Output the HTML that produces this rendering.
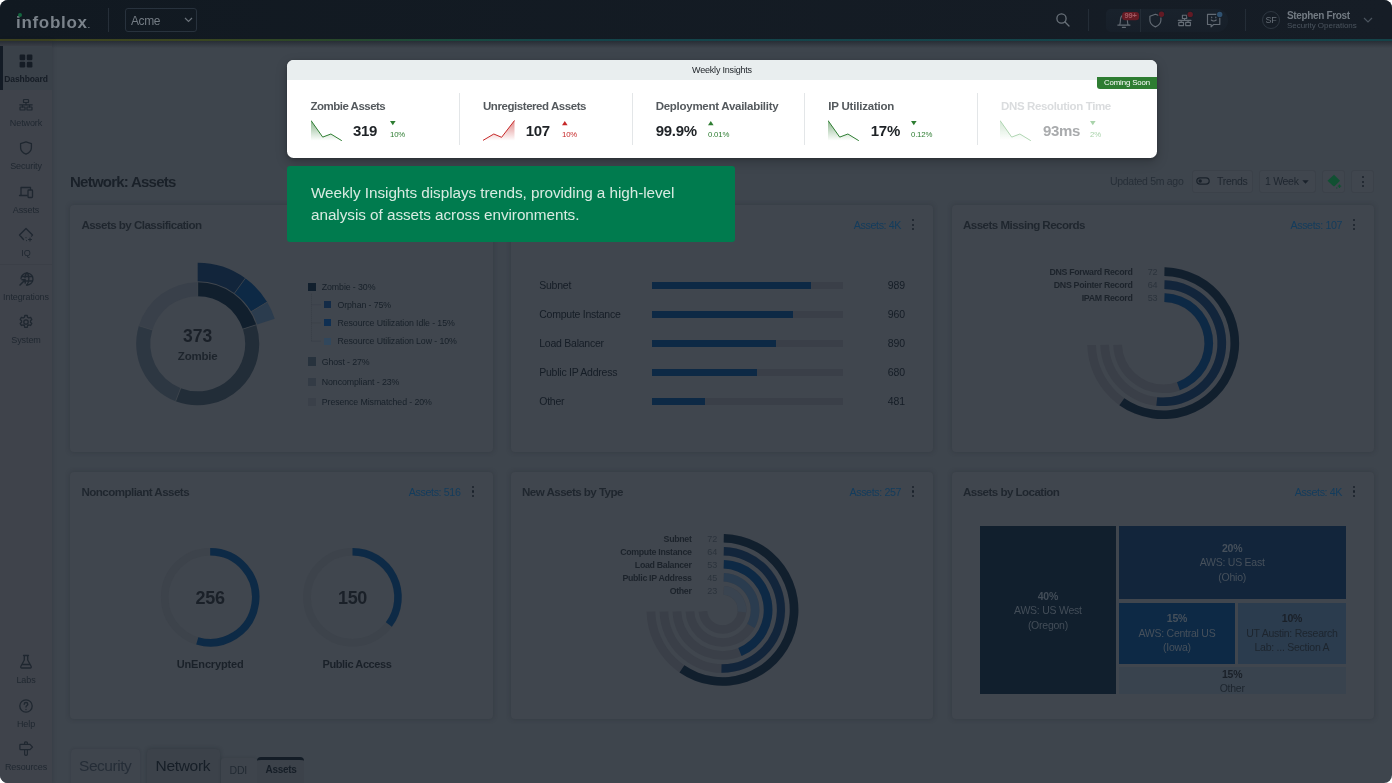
<!DOCTYPE html>
<html lang="en">
<head>
<meta charset="utf-8">
<title>Infoblox Portal - Network: Assets</title>
<style>
*{box-sizing:border-box;margin:0;padding:0}
html,body{width:1392px;height:783px;overflow:hidden;background:#fff}
body{font-family:"Liberation Sans",sans-serif;color:#1b222a;position:relative}
#app{will-change:transform;position:absolute;left:0;top:0;width:1392px;height:783px;background:#3e454d;border-radius:8px;overflow:hidden}
.abs{position:absolute}
/* header */
#hdr{position:absolute;left:0;top:0;width:1392px;height:40px;background:linear-gradient(90deg,#111921 0%,#161d26 100%)}
#hdrline{position:absolute;left:0;top:39px;width:1392px;height:2px;background:linear-gradient(90deg,#3f431f 0%,#3a4520 14%,#28472a 24%,#184a3c 32%,#14444a 40%,#154349 100%)}
#hdrshadow{position:absolute;left:0;top:41px;width:1392px;height:7px;background:linear-gradient(180deg,rgba(30,36,44,.7),rgba(30,36,44,0))}
/* sidebar */
#side{position:absolute;left:0;top:41px;width:52px;height:742px;background:#3f434b;box-shadow:0 0 4px rgba(28,33,40,.32)}
.nav{position:absolute;left:0;width:52px;height:44px;text-align:center;font-size:9px;color:#1f2730}
.nav span{position:absolute;left:-10px;width:72px;text-align:center;top:27.500px;line-height:11px;letter-spacing:-.1px}
.nav svg{position:absolute;left:17px;top:6px;width:18px;height:18px;fill:none;stroke:#1f2730;stroke-width:1.5;stroke-linecap:round;stroke-linejoin:round}
.nav.on{background:#3a4149;color:#151c25;font-weight:bold;font-size:8.5px;letter-spacing:-.35px}
.nav.on:before{content:"";position:absolute;left:0;top:0;width:3px;height:44px;background:#131b25}
/* cards */
.card{position:absolute;width:422.500px;height:247px;background:#40464e;border-radius:4px;box-shadow:0 0 5px rgba(30,35,42,.3)}
.card h3{position:absolute;left:11.400px;top:11.500px;font-size:11.600px;line-height:16px;font-weight:bold;color:#1f262e;letter-spacing:-.55px;white-space:nowrap}
.card .cnt{position:absolute;right:32px;top:12.500px;font-size:10.700px;line-height:14px;color:#123c5d;white-space:nowrap;letter-spacing:-.38px}
.kebab{position:absolute;width:3px;height:12px}
.kebab i{position:absolute;left:0;width:2.4px;height:2.4px;border-radius:50%;background:#1a222b}
.kebab i:nth-child(1){top:0}.kebab i:nth-child(2){top:4.5px}.kebab i:nth-child(3){top:9px}
.t{position:absolute;white-space:nowrap}
</style>
</head>
<body>
<div id="app">
<div id="hdr"></div>
<div id="hdrline"></div>
<div id="side"></div>
<div id="hdrshadow"></div>
<!--HEADER-->
<!-- header content -->
<div class="t" style="left:16px;top:11.500px;font-size:17px;line-height:22px;font-weight:bold;color:#7b838b;letter-spacing:.7px">infoblox<span style="font-size:8px;letter-spacing:0">.</span></div>
<div class="abs" style="left:18.200px;top:12.800px;width:3.800px;height:3.800px;border-radius:50%;background:#13663f"></div>
<div class="abs" style="left:108px;top:8px;width:1px;height:24px;background:#262f39"></div>
<div class="abs" style="left:125px;top:8px;width:72px;height:24px;border:1px solid #28323d;border-radius:3px"></div>
<div class="t" style="left:131px;top:13px;font-size:12px;line-height:16px;color:#747c84;letter-spacing:-.4px">Acme</div>
<svg class="abs" style="left:184px;top:17px" width="9" height="6" viewBox="0 0 9 6"><path d="M1 1l3.5 3.5L8 1" fill="none" stroke="#6a727a" stroke-width="1.2"/></svg>
<svg class="abs" style="left:1055px;top:12px" width="16" height="16" viewBox="0 0 16 16"><circle cx="6.5" cy="6.5" r="4.6" fill="none" stroke="#6a727a" stroke-width="1.3"/><path d="M10 10l4 4" stroke="#6a727a" stroke-width="1.3" stroke-linecap="round"/></svg>
<div class="abs" style="left:1088px;top:9px;width:1px;height:22px;background:#242d37"></div>
<div class="abs" style="left:1106px;top:8.500px;width:122px;height:23px;border-radius:5px 12px 12px 5px;background:linear-gradient(180deg,#19222c,#171f29)"></div>
<div class="abs" style="left:1140px;top:8.500px;width:1px;height:23px;background:#242d37"></div>
<svg class="abs" style="left:1100px;top:4px" width="140" height="32" viewBox="0 0 140 32" fill="none" stroke="#646c75" stroke-width="1.150" stroke-linecap="round" stroke-linejoin="round">
<path d="M17.800 21.100H30M19.700 21.100C20.400 19 20.300 17 20.500 15.300C20.800 12.600 22.300 11.400 23.900 11.400S27 12.600 27.300 15.300C27.500 17 27.400 19 28.100 21.100M22.400 23.400H25.400"/>
<path d="M55.400 10.300L60.900 12.200V16C60.900 19.500 58.500 21.700 55.400 22.900C52.300 21.700 49.900 19.500 49.900 16V12.200Z"/>
<path d="M82.400 11.200h4.300v3.300h-4.300zM78.800 18.400h4.700v3.200h-4.700zM85.700 18.400h4.700v3.200h-4.700zM84.550 14.500v1.900M78.300 16.400h12.700M81.150 16.400v2M88.050 16.400v2"/>
<path d="M107.500 10.300h12.300v10.200h-6.200l-2.500 2.300v-2.300h-3.600z"/>
<path d="M111.700 13v.7M115.800 13v.7M111.300 16c1.300 1.300 3.600 1.300 4.900 0"/>
<rect x="22.100" y="7.900" width="17" height="8.300" rx="3.300" fill="#651b24" stroke="none"/>
<circle cx="61.500" cy="10.200" r="3.400" fill="#171f29" stroke="none"/><circle cx="61.500" cy="10.200" r="2.700" fill="#621a24" stroke="none"/>
<circle cx="90.200" cy="10.400" r="3.400" fill="#171f29" stroke="none"/><circle cx="90.200" cy="10.400" r="2.700" fill="#621a24" stroke="none"/>
<circle cx="119.700" cy="10.400" r="3.400" fill="#171f29" stroke="none"/><circle cx="119.700" cy="10.400" r="2.700" fill="#2f5170" stroke="none"/>
</svg>
<div class="t" style="left:1122.100px;top:12px;width:17px;text-align:center;font-size:7.500px;line-height:8.300px;font-weight:bold;color:#a35b63;letter-spacing:-.2px">99+</div>
<div class="abs" style="left:1244.800px;top:9px;width:1px;height:22px;background:#242d37"></div>
<div class="abs" style="left:1262px;top:11px;width:18px;height:18px;border-radius:50%;border:1px solid #2e3741"></div>
<div class="t" style="left:1262px;top:14px;width:18px;text-align:center;font-size:9px;line-height:12px;color:#69717a;letter-spacing:-.2px">SF</div>
<div class="t" style="left:1287px;top:9px;font-size:10px;line-height:13px;font-weight:bold;color:#727a82;letter-spacing:-.35px">Stephen Frost</div>
<div class="t" style="left:1287px;top:21px;font-size:8px;line-height:10px;color:#4b545e;letter-spacing:-.03px">Security Operations</div>
<svg class="abs" style="left:1363px;top:17px" width="10" height="6" viewBox="0 0 10 6"><path d="M1 1l4 4 4-4" fill="none" stroke="#4a535d" stroke-width="1.200"/></svg>
<!--/HEADER-->
<!--SIDENAV-->
<!-- sidebar nav -->
<div class="nav on" style="top:46px"><svg viewBox="0 0 18 18" style="fill:#151c25;stroke:none"><rect x="2.600" y="2.600" width="5.600" height="5.600" rx="1.200"/><rect x="9.800" y="2.600" width="5.600" height="5.600" rx="1.200"/><rect x="2.600" y="9.800" width="5.600" height="5.600" rx="1.200"/><rect x="9.800" y="9.800" width="5.600" height="5.600" rx="1.200"/></svg><span>Dashboard</span></div>
<div class="nav" style="top:90px"><svg viewBox="0 0 18 18" style="stroke-width:1.200"><rect x="6.500" y="3.500" width="5" height="3" rx=".6"/><rect x="3" y="11" width="5" height="3" rx=".6"/><rect x="10" y="11" width="5" height="3" rx=".6"/><path d="M9 6.500v2.300M2.800 8.800h12.400M5.500 8.800v2.200M12.500 8.800v2.200"/></svg><span>Network</span></div>
<div class="nav" style="top:133px"><svg viewBox="0 0 18 18" style="stroke-width:1.300"><path d="M9 2.800l5.400 1.800v4.200c0 3.200-2.400 5.200-5.400 6.400-3-1.200-5.400-3.200-5.400-6.400v-4.200z"/></svg><span>Security</span></div>
<div class="nav" style="top:177px"><svg viewBox="0 0 18 18" style="stroke-width:1.300"><path d="M10 12.500h-7.500M4 12.500v-8h9.500v2"/><rect x="11" y="7" width="4.500" height="7.500" rx=".8"/></svg><span>Assets</span></div>
<div class="nav" style="top:220px"><svg viewBox="0 0 18 18" style="stroke-width:1.300"><path d="M6.500 13.500l-4-4.500 6.500-6.500 6.500 6.500-1 1"/><path d="M13 12v3M11.500 13.500h3M9.500 14.500v.1M9 11.500v.1" stroke-width="1.100"/></svg><span>IQ</span></div>
<div class="abs" style="left:0;top:263.500px;width:52px;height:1px;background:#3b3f47"></div>
<div class="nav" style="top:264px"><svg viewBox="0 0 18 18" style="stroke-width:1.300"><path d="M4 8.500a6 6 0 1 1 5.500 6.500"/><path d="M10 2.800c-2 2-2 4-2 5M10 2.800c2.500 2.500 2.500 9 0 12M4.500 6.500h11M9.500 11h6"/><path d="M3 15l5-5M5 9.800h3.200v3.200" stroke-width="1.500"/></svg><span>Integrations</span></div>
<div class="nav" style="top:307px"><svg viewBox="0 0 18 18" style="stroke-width:1.300"><circle cx="9" cy="9" r="2.200"/><path d="M7.800 2.500h2.400l.4 1.800 1.300.7 1.700-.6 1.200 2.100-1.300 1.200v1.500l1.300 1.200-1.200 2.100-1.700-.6-1.300.7-.4 1.800h-2.400l-.4-1.800-1.300-.7-1.700.6-1.200-2.100 1.300-1.200v-1.500l-1.300-1.200 1.200-2.100 1.700.6 1.300-.7z"/></svg><span>System</span></div>
<div class="nav" style="top:647px"><svg viewBox="0 0 18 18" style="stroke-width:1.300"><path d="M6.500 2.500h5M7.300 2.500v4.500l-3.500 6.500c-.3.900.2 1.500 1 1.500h8.400c.8 0 1.300-.6 1-1.500l-3.500-6.500v-4.500M5 11.500h8"/></svg><span>Labs</span></div>
<div class="nav" style="top:691px"><svg viewBox="0 0 18 18" style="stroke-width:1.300"><circle cx="9" cy="9" r="6.200"/><path d="M7.200 7.300c0-1.100.8-1.800 1.800-1.800s1.800.7 1.800 1.700c0 1.300-1.800 1.400-1.800 2.800M9 12.300v.2"/></svg><span>Help</span></div>
<div class="nav" style="top:734px"><svg viewBox="0 0 18 18" style="stroke-width:1.200"><path d="M7.600 4.400v-1.600c0-.6.600-1 1.400-1s1.400.4 1.400 1v1.600M3.600 4.400h9.400l2.500 2.650-2.500 2.650h-9.400c-.4 0-.7-.3-.7-.7v-3.900c0-.4.300-.7.700-.7zM7.600 9.700v4.600c0 .6.600 1 1.400 1s1.400-.4 1.400-1v-4.600"/></svg><span>Resources</span></div>
<!--/SIDENAV-->
<!--TOOLBAR-->
<!-- page toolbar -->
<div class="t" style="left:70px;top:172px;font-size:15px;line-height:20px;font-weight:bold;color:#1a2129;letter-spacing:-.76px">Network: Assets</div>
<div class="t" style="left:1110px;top:175px;font-size:10.500px;line-height:13px;color:#262e37;letter-spacing:-.3px">Updated 5m ago</div>
<div class="abs" style="left:1191.700px;top:169.500px;width:61px;height:23px;border:1px solid #3b4149;border-radius:3px;background:#40464e"></div>
<svg class="abs" style="left:1196px;top:176px" width="14" height="10" viewBox="0 0 14 10"><rect x=".8" y="1.800" width="12.400" height="6.400" rx="3.200" fill="none" stroke="#1a222b" stroke-width="1.200"/><circle cx="4.200" cy="5" r="1.700" fill="#1a222b"/></svg>
<div class="t" style="left:1217px;top:175px;font-size:10.500px;line-height:13px;color:#1e262f;letter-spacing:-.3px">Trends</div>
<div class="abs" style="left:1258.800px;top:169.500px;width:57.300px;height:23px;border:1px solid #3b4149;border-radius:3px;background:#40464e"></div>
<div class="t" style="left:1265px;top:175px;font-size:10.500px;line-height:13px;color:#1e262f;letter-spacing:-.3px">1 Week</div>
<svg class="abs" style="left:1302px;top:180px" width="7" height="4" viewBox="0 0 7 4"><path d="M.3 .3h6.400l-3.200 3.400z" fill="#1a222b"/></svg>
<div class="abs" style="left:1322.300px;top:169.500px;width:23.200px;height:23px;border:1px solid #3b4149;border-radius:3px;background:#40464e"></div>
<svg class="abs" style="left:1325.500px;top:173px" width="17" height="17" viewBox="0 0 17 17"><path d="M8 1.800l6 6-5.500 5.500h-1l-6-5.500z" fill="#115032"/><path d="M13.500 11.500v3.400M11.800 13.200h3.400" stroke="#115032" stroke-width="1.200"/><circle cx="10.800" cy="15" r=".7" fill="#115032"/></svg>
<div class="abs" style="left:1351.300px;top:169.500px;width:23.200px;height:23px;border:1px solid #3b4149;border-radius:3px;background:#40464e"></div>
<div class="kebab" style="left:1361.800px;top:176px"><i></i><i></i><i></i></div>
<!--/TOOLBAR-->
<!--CARDS-->
<div class="card" style="left:70px;top:205.3px"><h3>Assets by Classification</h3><div class="kebab" style="left:401.500px;top:13.800px"><i></i><i></i><i></i></div><svg class="abs" style="left:0;top:0" width="422" height="247" viewBox="0 0 422 247"><path d="M127.70 77.30A61.5 61.5 0 0 1 186.19 119.80L172.88 124.12A47.5 47.5 0 0 0 127.70 91.30Z" fill="#111f2d"/><path d="M186.19 119.80A61.5 61.5 0 0 1 105.66 196.22L110.68 183.15A47.5 47.5 0 0 0 172.88 124.12Z" fill="#222d38"/><path d="M105.66 196.22A61.5 61.5 0 0 1 68.89 120.82L82.28 124.91A47.5 47.5 0 0 0 110.68 183.15Z" fill="#2d3742"/><path d="M68.89 120.82A61.5 61.5 0 0 1 127.70 77.30L127.70 91.30A47.5 47.5 0 0 0 82.28 124.91Z" fill="#39404a"/><path d="M127.70 57.80A81 81 0 0 1 175.31 73.27L164.44 88.24A62.5 62.5 0 0 0 127.70 76.30Z" fill="#12253b"/><path d="M175.31 73.27A81 81 0 0 1 197.13 97.08L181.27 106.61A62.5 62.5 0 0 0 164.44 88.24Z" fill="#0d2945"/><path d="M197.13 97.08A81 81 0 0 1 204.74 113.77L187.14 119.49A62.5 62.5 0 0 0 181.27 106.61Z" fill="#2b3c4e"/><path d="M172.40 124.28L186.67 119.64" stroke="#3f454d" stroke-width=".8"/><path d="M110.86 182.68L105.48 196.68" stroke="#3f454d" stroke-width=".8"/><path d="M82.75 125.06L68.41 120.67" stroke="#3f454d" stroke-width=".8"/><path d="M127.70 91.80L127.70 76.80" stroke="#3f454d" stroke-width=".8"/><path d="M164.14 88.64L175.60 72.87" stroke="#3f454d" stroke-width=".8"/><path d="M180.84 106.87L197.56 96.82" stroke="#3f454d" stroke-width=".8"/><path d="M241.5 88.69999999999999V136.2M241.5 99.69999999999999H251M241.5 117.89999999999998H251M241.5 136.2H251" stroke="#363c45" stroke-width=".8" stroke-dasharray="1 1" fill="none"/></svg><div class="t" style="left:87.7px;top:119.39999999999998px;width:80px;text-align:center;font-size:17.500px;line-height:22px;font-weight:bold;color:#1a2028">373</div><div class="t" style="left:87.7px;top:143.39999999999998px;width:80px;text-align:center;font-size:11.500px;line-height:15px;font-weight:bold;color:#1d242c;letter-spacing:-.2px">Zombie</div><div class="abs" style="left:237.5px;top:77.25px;width:8.5px;height:8.5px;background:#111f2d"></div><div class="t" style="left:251.8px;top:75.5px;font-size:8.800px;line-height:12px;color:#172029;letter-spacing:-.1px;">Zombie - 30%</div><div class="abs" style="left:254px;top:96.0px;width:7px;height:7px;background:#132b47"></div><div class="t" style="left:267.5px;top:93.5px;font-size:8.800px;line-height:12px;color:#172029;letter-spacing:-.1px;">Orphan - 75%</div><div class="abs" style="left:254px;top:114.19999999999999px;width:7px;height:7px;background:#0f2f52"></div><div class="t" style="left:267.5px;top:111.69999999999999px;font-size:8.800px;line-height:12px;color:#172029;letter-spacing:-.1px;">Resource Utilization Idle - 15%</div><div class="abs" style="left:254px;top:132.39999999999998px;width:7px;height:7px;background:#31475c"></div><div class="t" style="left:267.5px;top:129.89999999999998px;font-size:8.800px;line-height:12px;color:#172029;letter-spacing:-.1px;">Resource Utilization Low - 10%</div><div class="abs" style="left:237.5px;top:152.05px;width:8.5px;height:8.5px;background:#27323d"></div><div class="t" style="left:251.8px;top:150.3px;font-size:8.800px;line-height:12px;color:#172029;letter-spacing:-.1px;">Ghost - 27%</div><div class="abs" style="left:237.5px;top:172.25px;width:8.5px;height:8.5px;background:#333b45"></div><div class="t" style="left:251.8px;top:170.5px;font-size:8.800px;line-height:12px;color:#172029;letter-spacing:-.1px;">Noncompliant - 23%</div><div class="abs" style="left:237.5px;top:192.64999999999998px;width:8.5px;height:8.5px;background:#3a4049"></div><div class="t" style="left:251.8px;top:190.89999999999998px;font-size:8.800px;line-height:12px;color:#172029;letter-spacing:-.1px;">Presence Mismatched - 20%</div></div>
<div class="card" style="left:510.6px;top:205.3px"><h3>Assets by Type</h3><div class="cnt">Assets: 4K</div><div class="kebab" style="left:401.500px;top:13.800px"><i></i><i></i><i></i></div><div class="t" style="left:28.7px;top:72.6px;font-size:10.500px;line-height:14px;color:#151d26;letter-spacing:-.25px">Subnet</div><div class="abs" style="left:141.0px;top:76.9px;width:191.4px;height:6.800px;background:#3a3f48"></div><div class="abs" style="left:141.0px;top:76.9px;width:159.6px;height:6.800px;background:#0d2945"></div><div class="t" style="left:349.4px;width:44.8px;text-align:right;top:72.6px;font-size:10.500px;line-height:14px;color:#151d26;letter-spacing:-.2px">989</div><div class="t" style="left:28.7px;top:101.6px;font-size:10.500px;line-height:14px;color:#151d26;letter-spacing:-.25px">Compute Instance</div><div class="abs" style="left:141.0px;top:105.9px;width:191.4px;height:6.800px;background:#3a3f48"></div><div class="abs" style="left:141.0px;top:105.9px;width:141.4px;height:6.800px;background:#0d2945"></div><div class="t" style="left:349.4px;width:44.8px;text-align:right;top:101.6px;font-size:10.500px;line-height:14px;color:#151d26;letter-spacing:-.2px">960</div><div class="t" style="left:28.7px;top:130.6px;font-size:10.500px;line-height:14px;color:#151d26;letter-spacing:-.25px">Load Balancer</div><div class="abs" style="left:141.0px;top:134.9px;width:191.4px;height:6.800px;background:#3a3f48"></div><div class="abs" style="left:141.0px;top:134.9px;width:124.1px;height:6.800px;background:#0d2945"></div><div class="t" style="left:349.4px;width:44.8px;text-align:right;top:130.6px;font-size:10.500px;line-height:14px;color:#151d26;letter-spacing:-.2px">890</div><div class="t" style="left:28.7px;top:159.6px;font-size:10.500px;line-height:14px;color:#151d26;letter-spacing:-.25px">Public IP Address</div><div class="abs" style="left:141.0px;top:163.9px;width:191.4px;height:6.800px;background:#3a3f48"></div><div class="abs" style="left:141.0px;top:163.9px;width:105.9px;height:6.800px;background:#0d2945"></div><div class="t" style="left:349.4px;width:44.8px;text-align:right;top:159.6px;font-size:10.500px;line-height:14px;color:#151d26;letter-spacing:-.2px">680</div><div class="t" style="left:28.7px;top:188.6px;font-size:10.500px;line-height:14px;color:#151d26;letter-spacing:-.25px">Other</div><div class="abs" style="left:141.0px;top:192.9px;width:191.4px;height:6.800px;background:#3a3f48"></div><div class="abs" style="left:141.0px;top:192.9px;width:53.0px;height:6.800px;background:#0d2945"></div><div class="t" style="left:349.4px;width:44.8px;text-align:right;top:188.6px;font-size:10.500px;line-height:14px;color:#151d26;letter-spacing:-.2px">481</div></div>
<div class="card" style="left:951.6px;top:205.3px"><h3>Assets Missing Records</h3><div class="cnt">Assets: 107</div><div class="kebab" style="left:401.500px;top:13.800px"><i></i><i></i><i></i></div><svg class="abs" style="left:0;top:0" width="422" height="247" viewBox="0 0 422 247"><path d="M212.58 62.31A75.89999999999999 75.89999999999999 0 1 1 135.32 140.11L143.92 139.89A67.3 67.3 0 1 0 212.42 70.91Z" fill="#3a3f48"/><path d="M212.58 62.31A75.89999999999999 75.89999999999999 0 1 1 167.34 200.14L172.31 193.13A67.3 67.3 0 1 0 212.42 70.91Z" fill="#111f2d"/><path d="M212.60 75.32A62.9 62.9 0 1 1 148.33 140.03L156.92 139.78A54.300000000000004 54.300000000000004 0 1 0 212.40 83.91Z" fill="#3a3f48"/><path d="M212.60 75.32A62.9 62.9 0 1 1 204.30 200.72L205.24 192.17A54.300000000000004 54.300000000000004 0 1 0 212.40 83.91Z" fill="#12253b"/><path d="M212.62 88.32A49.9 49.9 0 1 1 161.33 139.97L169.93 139.67A41.300000000000004 41.300000000000004 0 1 0 212.38 96.92Z" fill="#3a3f48"/><path d="M212.62 88.32A49.9 49.9 0 0 1 227.86 185.24L224.99 177.13A41.300000000000004 41.300000000000004 0 0 0 212.38 96.92Z" fill="#0d2945"/></svg><div class="t" style="left:20.9px;width:160px;text-align:right;top:61.2px;font-size:8.800px;line-height:12px;font-weight:bold;color:#1c232b;letter-spacing:-.3px">DNS Forward Record</div><div class="t" style="left:175.7px;width:30px;text-align:right;top:61.2px;font-size:9px;line-height:12px;color:#2b333c;letter-spacing:-.2px">72</div><div class="t" style="left:20.9px;width:160px;text-align:right;top:74.2px;font-size:8.800px;line-height:12px;font-weight:bold;color:#1c232b;letter-spacing:-.3px">DNS Pointer Record</div><div class="t" style="left:175.7px;width:30px;text-align:right;top:74.2px;font-size:9px;line-height:12px;color:#2b333c;letter-spacing:-.2px">64</div><div class="t" style="left:20.9px;width:160px;text-align:right;top:87.2px;font-size:8.800px;line-height:12px;font-weight:bold;color:#1c232b;letter-spacing:-.3px">IPAM Record</div><div class="t" style="left:175.7px;width:30px;text-align:right;top:87.2px;font-size:9px;line-height:12px;color:#2b333c;letter-spacing:-.2px">53</div></div>
<div class="card" style="left:70px;top:472.2px"><h3>Noncompliant Assets</h3><div class="cnt">Assets: 516</div><div class="kebab" style="left:401.500px;top:13.800px"><i></i><i></i><i></i></div><svg class="abs" style="left:0;top:0" width="422" height="247" viewBox="0 0 422 247"><circle cx="140.2" cy="125.2" r="45.5" fill="none" stroke="#3d434b" stroke-width="7.500"/><path d="M140.20 79.70A45.5 45.5 0 1 1 127.28 168.83" stroke="#0d2a46" stroke-width="7.5" fill="none"/><circle cx="282.5" cy="125.2" r="45.5" fill="none" stroke="#3d434b" stroke-width="7.500"/><path d="M282.50 79.70A45.5 45.5 0 0 1 318.84 152.58" stroke="#0d2a46" stroke-width="7.5" fill="none"/></svg><div class="t" style="left:100.2px;top:115.19999999999999px;width:80px;text-align:center;font-size:18px;line-height:22px;font-weight:bold;color:#1a2028;letter-spacing:-.3px">256</div><div class="t" style="left:242.5px;top:115.19999999999999px;width:80px;text-align:center;font-size:18px;line-height:22px;font-weight:bold;color:#1a2028;letter-spacing:-.3px">150</div><div class="t" style="left:80.2px;top:185.2px;width:120px;text-align:center;font-size:11px;line-height:15px;font-weight:bold;color:#1a2129;letter-spacing:-.14px">UnEncrypted</div><div class="t" style="left:227.0px;top:185.2px;width:120px;text-align:center;font-size:11px;line-height:15px;font-weight:bold;color:#1a2129;letter-spacing:-.41px">Public Access</div></div>
<div class="card" style="left:510.6px;top:472.2px"><h3>New Assets by Type</h3><div class="cnt">Assets: 257</div><div class="kebab" style="left:401.500px;top:13.800px"><i></i><i></i><i></i></div><svg class="abs" style="left:0;top:0" width="422" height="247" viewBox="0 0 422 247"><path d="M212.88 62.01A75.89999999999999 75.89999999999999 0 1 1 135.62 139.81L144.22 139.59A67.3 67.3 0 1 0 212.72 70.61Z" fill="#3a3f48"/><path d="M212.88 62.01A75.89999999999999 75.89999999999999 0 1 1 168.51 200.45L173.38 193.36A67.3 67.3 0 1 0 212.72 70.61Z" fill="#111f2d"/><path d="M212.90 75.02A62.9 62.9 0 1 1 148.63 139.73L157.22 139.48A54.300000000000004 54.300000000000004 0 1 0 212.70 83.61Z" fill="#3a3f48"/><path d="M212.90 75.02A62.9 62.9 0 0 1 210.40 200.79L210.55 192.19A54.300000000000004 54.300000000000004 0 0 0 212.70 83.61Z" fill="#12253b"/><path d="M212.92 88.02A49.9 49.9 0 1 1 161.63 139.67L170.23 139.37A41.300000000000004 41.300000000000004 0 1 0 212.68 96.62Z" fill="#3a3f48"/><path d="M212.92 88.02A49.9 49.9 0 0 1 230.60 184.00L227.30 176.06A41.300000000000004 41.300000000000004 0 0 0 212.68 96.62Z" fill="#0d2945"/><path d="M212.97 101.03A36.9 36.9 0 1 1 174.64 139.63L183.23 139.23A28.3 28.3 0 1 0 212.63 109.62Z" fill="#3a3f48"/><path d="M212.97 101.03A36.9 36.9 0 0 1 243.62 156.07L236.13 151.84A28.3 28.3 0 0 0 212.63 109.62Z" fill="#2a3c4f"/><path d="M213.09 114.05A23.900000000000002 23.900000000000002 0 1 1 187.66 139.65L196.24 139.02A15.3 15.3 0 1 0 212.51 122.63Z" fill="#3a3f48"/><path d="M213.09 114.05A23.900000000000002 23.900000000000002 0 0 1 235.27 140.40L226.72 139.50A15.3 15.3 0 0 0 212.51 122.63Z" fill="#3a4450"/></svg><div class="t" style="left:21.0px;width:160px;text-align:right;top:60.9px;font-size:8.800px;line-height:12px;font-weight:bold;color:#1c232b;letter-spacing:-.3px">Subnet</div><div class="t" style="left:176.4px;width:30px;text-align:right;top:60.9px;font-size:9px;line-height:12px;color:#2b333c;letter-spacing:-.2px">72</div><div class="t" style="left:21.0px;width:160px;text-align:right;top:73.9px;font-size:8.800px;line-height:12px;font-weight:bold;color:#1c232b;letter-spacing:-.3px">Compute Instance</div><div class="t" style="left:176.4px;width:30px;text-align:right;top:73.9px;font-size:9px;line-height:12px;color:#2b333c;letter-spacing:-.2px">64</div><div class="t" style="left:21.0px;width:160px;text-align:right;top:86.9px;font-size:8.800px;line-height:12px;font-weight:bold;color:#1c232b;letter-spacing:-.3px">Load Balancer</div><div class="t" style="left:176.4px;width:30px;text-align:right;top:86.9px;font-size:9px;line-height:12px;color:#2b333c;letter-spacing:-.2px">53</div><div class="t" style="left:21.0px;width:160px;text-align:right;top:99.9px;font-size:8.800px;line-height:12px;font-weight:bold;color:#1c232b;letter-spacing:-.3px">Public IP Address</div><div class="t" style="left:176.4px;width:30px;text-align:right;top:99.9px;font-size:9px;line-height:12px;color:#2b333c;letter-spacing:-.2px">45</div><div class="t" style="left:21.0px;width:160px;text-align:right;top:112.9px;font-size:8.800px;line-height:12px;font-weight:bold;color:#1c232b;letter-spacing:-.3px">Other</div><div class="t" style="left:176.4px;width:30px;text-align:right;top:112.9px;font-size:9px;line-height:12px;color:#2b333c;letter-spacing:-.2px">23</div></div>
<div class="card" style="left:951.6px;top:472.2px"><h3>Assets by Location</h3><div class="cnt">Assets: 4K</div><div class="kebab" style="left:401.500px;top:13.800px"><i></i><i></i><i></i></div><div class="abs" style="left:28.5px;top:54.3px;width:135.6px;height:167.6px;background:#111f2d;text-align:center;font-size:10.500px;line-height:14.5px;color:#434d58;letter-spacing:-.25px;padding-top:62.1px;white-space:nowrap;overflow:hidden"><div style="font-weight:bold;color:#434d58">40%</div><div>AWS: US West</div><div>(Oregon)</div></div><div class="abs" style="left:167.0px;top:54.3px;width:227.1px;height:72.5px;background:#12253b;text-align:center;font-size:10.500px;line-height:14.5px;color:#46505b;letter-spacing:-.25px;padding-top:14.5px;white-space:nowrap;overflow:hidden"><div style="font-weight:bold;color:#46505b">20%</div><div>AWS: US East</div><div>(Ohio)</div></div><div class="abs" style="left:167.0px;top:130.5px;width:116.7px;height:61.0px;background:#0d2945;text-align:center;font-size:10.500px;line-height:14.5px;color:#46505b;letter-spacing:-.25px;padding-top:8.8px;white-space:nowrap;overflow:hidden"><div style="font-weight:bold;color:#46505b">15%</div><div>AWS: Central US</div><div>(Iowa)</div></div><div class="abs" style="left:286.6px;top:130.5px;width:107.5px;height:61.1px;background:#2b3c4e;text-align:center;font-size:10.500px;line-height:14.5px;color:#1d252e;letter-spacing:-.25px;padding-top:8.8px;white-space:nowrap;overflow:hidden"><div style="font-weight:bold;color:#1a2028">10%</div><div>UT Austin: Research</div><div>Lab: ... Section A</div></div><div class="abs" style="left:167.0px;top:194.6px;width:227.1px;height:27.3px;background:#39434e;text-align:center;font-size:10.500px;line-height:14.5px;color:#1d252e;letter-spacing:-.25px;padding-top:-0.8px;white-space:nowrap;overflow:hidden"><div style="font-weight:bold;color:#1a2028">15%</div><div>Other</div></div></div>
<!--/CARDS-->
<!--TABS-->
<!-- bottom tabs -->
<div class="abs" style="left:70.500px;top:748.500px;width:69.500px;height:40px;background:#3f454d;border-radius:4px 4px 0 0;box-shadow:0 0 3px rgba(28,33,40,.22)"></div>
<div class="t" style="left:79px;top:756px;font-size:15.500px;line-height:20px;color:#252d37;letter-spacing:-.45px">Security</div>
<div class="abs" style="left:147px;top:748.500px;width:73px;height:40px;background:#3c424a;border-radius:4px 4px 0 0;box-shadow:0 0 4px rgba(24,29,36,.3)"></div>
<div class="t" style="left:155.500px;top:756px;font-size:15.500px;line-height:20px;color:#161e27;letter-spacing:-.3px">Network</div>
<div class="abs" style="left:221px;top:757.500px;width:36px;height:30px;background:#3e444c;border-radius:3px 3px 0 0;box-shadow:0 0 3px rgba(28,33,40,.2)"></div>
<div class="t" style="left:229.500px;top:763px;font-size:10.500px;line-height:14px;color:#222a33;letter-spacing:-.2px">DDI</div>
<div class="abs" style="left:257px;top:757px;width:46.500px;height:30px;background:#3c424a;border-top:3px solid #131c26;border-radius:4px 4px 0 0"></div>
<div class="t" style="left:265.500px;top:763px;font-size:10px;line-height:14px;color:#161e27;letter-spacing:-.3px;font-weight:bold">Assets</div>
<!--/TABS-->
<!--MODAL-->
<!-- weekly insights modal -->
<div class="abs" style="left:287px;top:60px;width:870px;height:98px;background:#fff;border-radius:6.500px;overflow:hidden;box-shadow:0 1px 3px rgba(0,0,0,.2),0 4px 12px rgba(0,0,0,.22)">
<div class="abs" style="left:0;top:0;width:870px;height:20px;background:#e9eeef"></div>
<div class="t" style="left:0;top:4px;width:870px;text-align:center;font-size:9px;line-height:12px;color:#22272c;letter-spacing:-.2px">Weekly Insights</div>
<div class="abs" style="left:810px;top:17px;width:60px;height:11.500px;background:#2e7d32;border-radius:0 0 0 3px"></div>
<div class="t" style="left:810px;top:17px;width:60px;text-align:center;font-size:7.800px;line-height:11.500px;color:#fff;letter-spacing:-.1px">Coming Soon</div>
<div class="abs" style="left:172px;top:33px;width:1px;height:52px;background:#e3e6e8"></div>
<div class="abs" style="left:345px;top:33px;width:1px;height:52px;background:#e3e6e8"></div>
<div class="abs" style="left:517px;top:33px;width:1px;height:52px;background:#e3e6e8"></div>
<div class="abs" style="left:690px;top:33px;width:1px;height:52px;background:#e3e6e8"></div>
<!--TILES-->
<div class="t" style="left:23.5px;top:38.5px;font-size:11.500px;line-height:15px;font-weight:bold;color:#54595d;letter-spacing:-0.51px">Zombie Assets</div><svg class="abs" style="left:23.5px;top:59.9px;opacity:1" width="33" height="22" viewBox="0 0 33 22"><defs><linearGradient id="g1" x1="0" y1="0" x2="0" y2="1"><stop offset="0" stop-color="#2e7d32" stop-opacity=".55"/><stop offset="1" stop-color="#2e7d32" stop-opacity="0"/></linearGradient></defs><path d="M0.0 0.5 L11.7 17.1 L19.9 14.0 L30.8 20.7 L30.8 20.7 L0 20.7Z" fill="url(#g1)"/><path d="M0.0 0.5 L11.7 17.1 L19.9 14.0 L30.8 20.7" fill="none" stroke="#2e7d32" stroke-width="1"/></svg><div class="t" style="left:65.9px;top:61px;font-size:15px;line-height:19px;font-weight:bold;color:#1e2226;letter-spacing:-.3px">319</div><svg class="abs" style="left:103.0px;top:61.3px" width="6" height="5" viewBox="0 0 6 5"><path d="M0 0H5.600L2.800 4.200Z" fill="#2e7d32"/></svg><div class="t" style="left:103.0px;top:69.69999999999999px;font-size:7.800px;line-height:10px;color:#2e7d32;letter-spacing:-.2px">10%</div><div class="t" style="left:196.0px;top:38.5px;font-size:11.500px;line-height:15px;font-weight:bold;color:#54595d;letter-spacing:-0.44px">Unregistered Assets</div><svg class="abs" style="left:195.5px;top:59.9px;opacity:1" width="33" height="22" viewBox="0 0 33 22"><defs><linearGradient id="g2" x1="0" y1="0" x2="0" y2="1"><stop offset="0" stop-color="#c62828" stop-opacity=".55"/><stop offset="1" stop-color="#c62828" stop-opacity="0"/></linearGradient></defs><path d="M0.0 20.4 L10.8 14.0 L18.6 17.3 L31.5 0.5 L31.5 20.7 L0 20.7Z" fill="url(#g2)"/><path d="M0.0 20.4 L10.8 14.0 L18.6 17.3 L31.5 0.5" fill="none" stroke="#c62828" stroke-width="1"/></svg><div class="t" style="left:238.7px;top:61px;font-size:15px;line-height:19px;font-weight:bold;color:#1e2226;letter-spacing:-.3px">107</div><svg class="abs" style="left:275.0px;top:61.3px" width="6" height="5" viewBox="0 0 6 5"><path d="M0 4.200L2.800 0L5.600 4.200Z" fill="#c62828"/></svg><div class="t" style="left:275.0px;top:69.69999999999999px;font-size:7.800px;line-height:10px;color:#c62828;letter-spacing:-.2px">10%</div><div class="t" style="left:368.7px;top:38.5px;font-size:11.500px;line-height:15px;font-weight:bold;color:#54595d;letter-spacing:-0.27px">Deployment Availability</div><div class="t" style="left:368.7px;top:61px;font-size:15px;line-height:19px;font-weight:bold;color:#1e2226;letter-spacing:-.3px">99.9%</div><svg class="abs" style="left:421.0px;top:61.3px" width="6" height="5" viewBox="0 0 6 5"><path d="M0 4.200L2.800 0L5.600 4.200Z" fill="#2e7d32"/></svg><div class="t" style="left:421.0px;top:69.69999999999999px;font-size:7.800px;line-height:10px;color:#2e7d32;letter-spacing:-.2px">0.01%</div><div class="t" style="left:541.2px;top:38.5px;font-size:11.500px;line-height:15px;font-weight:bold;color:#54595d;letter-spacing:-0.2px">IP Utilization</div><svg class="abs" style="left:540.7px;top:59.9px;opacity:1" width="33" height="22" viewBox="0 0 33 22"><defs><linearGradient id="g3" x1="0" y1="0" x2="0" y2="1"><stop offset="0" stop-color="#2e7d32" stop-opacity=".55"/><stop offset="1" stop-color="#2e7d32" stop-opacity="0"/></linearGradient></defs><path d="M0.0 0.5 L11.7 17.1 L19.9 14.0 L30.8 20.7 L30.8 20.7 L0 20.7Z" fill="url(#g3)"/><path d="M0.0 0.5 L11.7 17.1 L19.9 14.0 L30.8 20.7" fill="none" stroke="#2e7d32" stroke-width="1"/></svg><div class="t" style="left:583.8px;top:61px;font-size:15px;line-height:19px;font-weight:bold;color:#1e2226;letter-spacing:-.3px">17%</div><svg class="abs" style="left:624.0px;top:61.3px" width="6" height="5" viewBox="0 0 6 5"><path d="M0 0H5.600L2.800 4.200Z" fill="#2e7d32"/></svg><div class="t" style="left:624.0px;top:69.69999999999999px;font-size:7.800px;line-height:10px;color:#2e7d32;letter-spacing:-.2px">0.12%</div><div class="t" style="left:714.0px;top:38.5px;font-size:11.500px;line-height:15px;font-weight:bold;color:#dadcde;letter-spacing:-0.36px">DNS Resolution Time</div><svg class="abs" style="left:713.3px;top:59.9px;opacity:0.8" width="33" height="22" viewBox="0 0 33 22"><defs><linearGradient id="g4" x1="0" y1="0" x2="0" y2="1"><stop offset="0" stop-color="#9ccb9f" stop-opacity=".55"/><stop offset="1" stop-color="#9ccb9f" stop-opacity="0"/></linearGradient></defs><path d="M0.0 0.5 L11.7 17.1 L19.9 14.0 L30.8 20.7 L30.8 20.7 L0 20.7Z" fill="url(#g4)"/><path d="M0.0 0.5 L11.7 17.1 L19.9 14.0 L30.8 20.7" fill="none" stroke="#9ccb9f" stroke-width="1"/></svg><div class="t" style="left:756.0px;top:61px;font-size:15px;line-height:19px;font-weight:bold;color:#a9abad;letter-spacing:-.3px">93ms</div><svg class="abs" style="left:803.0px;top:61.3px" width="6" height="5" viewBox="0 0 6 5"><path d="M0 0H5.600L2.800 4.200Z" fill="#a9d3ab"/></svg><div class="t" style="left:803.0px;top:69.69999999999999px;font-size:7.800px;line-height:10px;color:#a9d3ab;letter-spacing:-.2px">2%</div><!--/TILES-->
</div>
<!-- tooltip -->
<div class="abs" style="left:287px;top:166px;width:448px;height:75.500px;background:#007b4e;border-radius:3px"></div>
<div class="t" style="left:311px;top:181.700px;font-size:15.300px;line-height:22px;color:#d8ebe2;letter-spacing:-.05px;white-space:normal;width:400px">Weekly Insights displays trends, providing a high-level analysis of assets across environments.</div>
<!--/MODAL-->
</div>
</body>
</html>
